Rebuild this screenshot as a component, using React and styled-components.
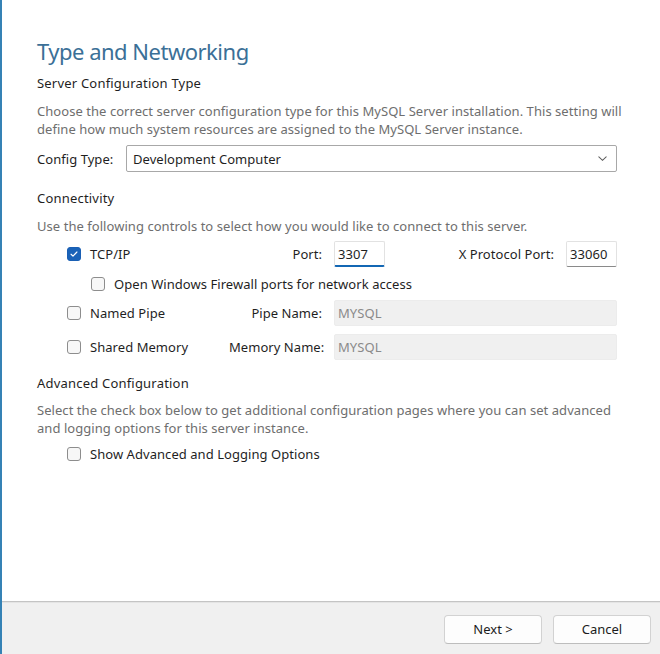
import React from 'react';
import styled, { createGlobalStyle } from 'styled-components';

const GlobalStyle = createGlobalStyle`
  html, body {
    margin: 0;
    padding: 0;
    background: #ffffff;
  }
  body {
    font-family: "Noto Sans", "Open Sans", sans-serif;
    color: #1f1f1f;
  }
`;

// Small checkbox drawn like the Windows 11 one
const Check = ({ checked }) => (
  <Box $checked={checked}>
    {checked && (
      <svg viewBox="0 0 12 12" width="10" height="10">
        <path d="M2.5 6.3l2.3 2.3 4.7-5" fill="none" stroke="#fff" strokeWidth="1.4" strokeLinecap="round" strokeLinejoin="round" />
      </svg>
    )}
  </Box>
);

const App = () => {
  return (
    <>
      <GlobalStyle />
      <Window>
        <Content>
          <Title>Type and Networking</Title>

          <Heading>Server Configuration Type</Heading>
          <Description $top={10}>
            Choose the correct server configuration type for this MySQL Server installation. This setting will<br />
            define how much system resources are assigned to the MySQL Server instance.
          </Description>
          <ConfigRow>
            <ConfigLabel>Config Type:</ConfigLabel>
            <Select>
              <span>Development Computer</span>
              <svg viewBox="0 0 12 12" width="11" height="11">
                <path d="M2 4.2l4 3.8 4-3.8" fill="none" stroke="#5c5c5c" strokeWidth="1.1" strokeLinecap="round" />
              </svg>
            </Select>
          </ConfigRow>

          <Heading $top={17}>Connectivity</Heading>
          <Description $top={10}>
            Use the following controls to select how you would like to connect to this server.
          </Description>

          <ConnRow $top={6}>
            <CheckCell>
              <Check checked />
              <span>TCP/IP</span>
            </CheckCell>
            <FieldLabel>Port:</FieldLabel>
            <FieldGroup>
              <TextInput $width={51} $focused>3307</TextInput>
              <InlineLabel>X Protocol Port:</InlineLabel>
              <TextInput $width={51}>33060</TextInput>
            </FieldGroup>
          </ConnRow>

          <SubRow $top={6}>
            <CheckCell>
              <Check />
              <span>Open Windows Firewall ports for network access</span>
            </CheckCell>
          </SubRow>

          <ConnRow $top={5}>
            <CheckCell>
              <Check />
              <span>Named Pipe</span>
            </CheckCell>
            <FieldLabel>Pipe Name:</FieldLabel>
            <TextInput $disabled>MYSQL</TextInput>
          </ConnRow>

          <ConnRow $top={8}>
            <CheckCell>
              <Check />
              <span>Shared Memory</span>
            </CheckCell>
            <FieldLabel>Memory Name:</FieldLabel>
            <TextInput $disabled>MYSQL</TextInput>
          </ConnRow>

          <Heading $top={14}>Advanced Configuration</Heading>
          <Description $top={9}>
            Select the check box below to get additional configuration pages where you can set advanced<br />
            and logging options for this server instance.
          </Description>
          <SubRow $indent={30} $top={6}>
            <CheckCell>
              <Check />
              <span>Show Advanced and Logging Options</span>
            </CheckCell>
          </SubRow>
        </Content>

        <Footer>
          <Button>Next &gt;</Button>
          <Button>Cancel</Button>
        </Footer>
      </Window>
    </>
  );
};

const Window = styled.div`
  height: 654px;
  display: flex;
  flex-direction: column;
  border-left: 2px solid #3582b5;
  box-sizing: border-box;
  overflow: hidden;
`;

const Content = styled.div`
  flex: 1;
  padding: 36px 43px 0 35px;
  font-size: 13px;
  letter-spacing: 0.05px;
`;

const Title = styled.h1`
  margin: 0;
  font-size: 22px;
  line-height: 30px;
  font-weight: 400;
  color: #3b7097;
  letter-spacing: -0.5px;
`;

const Heading = styled.div`
  margin-top: ${(p) => p.$top ?? 8}px;
  font-size: 13px;
  line-height: 18px;
  color: #1f1f1f;
  letter-spacing: 0.2px;
`;

const Description = styled.div`
  margin-top: ${(p) => p.$top ?? 8}px;
  font-size: 13px;
  line-height: 18px;
  color: #6e6e6e;
  white-space: nowrap;
`;

const ConfigRow = styled.div`
  display: flex;
  align-items: center;
  margin-top: 7px;
`;

const ConfigLabel = styled.div`
  width: 89px;
  flex-shrink: 0;
`;

const Select = styled.div`
  flex: 1;
  height: 27px;
  box-sizing: border-box;
  border: 1px solid #a8a8a8;
  border-radius: 2px;
  display: flex;
  align-items: center;
  justify-content: space-between;
  padding: 0 8px 0 6px;
  background: #ffffff;
`;

const ConnRow = styled.div`
  display: grid;
  grid-template-columns: 150px 93px 283px;
  column-gap: 12px;
  align-items: center;
  margin-top: ${(p) => p.$top ?? 0}px;
  padding-left: 30px;
`;

const SubRow = styled.div`
  display: flex;
  align-items: center;
  height: 22px;
  margin-top: ${(p) => p.$top ?? 3}px;
  padding-left: ${(p) => p.$indent ?? 54}px;
`;

const CheckCell = styled.div`
  display: flex;
  align-items: center;
  gap: 9px;
  color: #1f1f1f;
  white-space: nowrap;
`;

const Box = styled.span`
  width: 14px;
  height: 14px;
  box-sizing: border-box;
  border-radius: 3px;
  flex-shrink: 0;
  display: inline-flex;
  align-items: center;
  justify-content: center;
  border: 1px solid ${(p) => (p.$checked ? '#1a5fb4' : '#8d8d8d')};
  background: ${(p) => (p.$checked ? '#1a63b8' : '#f7f7f7')};
`;

const FieldLabel = styled.div`
  text-align: right;
  white-space: nowrap;
`;

const FieldGroup = styled.div`
  display: flex;
  align-items: center;
`;

const InlineLabel = styled.div`
  flex: 1;
  text-align: right;
  padding-right: 12px;
  white-space: nowrap;
`;

const TextInput = styled.div`
  width: ${(p) => (p.$width ? `${p.$width}px` : 'auto')};
  height: 26px;
  box-sizing: border-box;
  display: flex;
  align-items: center;
  padding: 0 3px;
  border-radius: 2px;
  border: 1px solid ${(p) => (p.$disabled ? '#ececec' : '#e2e2e2')};
  border-bottom: ${(p) =>
    p.$focused ? '2px solid #1367b4' : p.$disabled ? '1px solid #ececec' : '1px solid #8a8a8a'};
  background: ${(p) => (p.$disabled ? '#f0f0f0' : '#ffffff')};
  color: ${(p) => (p.$disabled ? '#8a8a8a' : '#1f1f1f')};
`;

const Footer = styled.div`
  height: 53px;
  flex-shrink: 0;
  background: #f0f0f0;
  border-top: 1px solid #c4c4c4;
  box-shadow: inset 0 1px 0 #e4e4e4;
  display: flex;
  align-items: center;
  justify-content: flex-end;
  gap: 11px;
  padding: 2px 9px 0 0;
  box-sizing: border-box;
`;

const Button = styled.button`
  width: 98px;
  height: 29px;
  border: 1px solid #d2d2d2;
  border-bottom-color: #bdbdbd;
  border-radius: 4px;
  background: #fdfdfd;
  font-family: "Noto Sans", "Open Sans", sans-serif;
  font-size: 13px;
  color: #1b1b1b;
  padding: 0;
`;

export default App;
